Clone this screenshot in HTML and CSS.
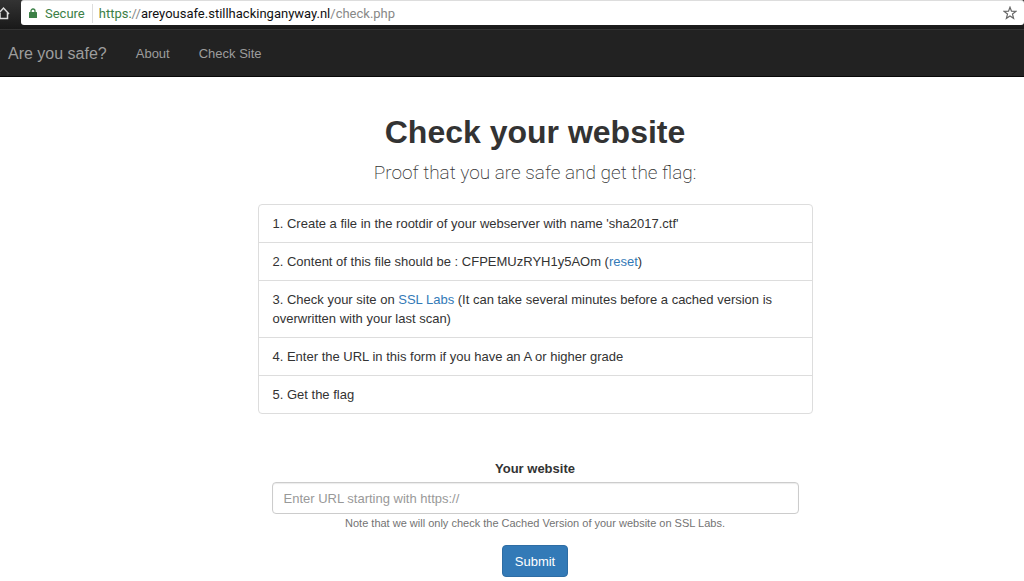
FILE: index.html
```html
<!DOCTYPE html>
<html lang="en">
<head>
  <meta charset="utf-8">
  <title>Are you safe?</title>
  <link rel="stylesheet" href="styles.css">
</head>
<body>
  <div class="browser">
    <button type="button" class="home" aria-label="Home">
      <svg width="12" height="14" viewBox="0 0 12 14"><path d="M-2 8 L3.500 2 L9 8 M0 7 V12.500 H7.500 V7" fill="none" stroke="#ddd" stroke-width="1.500"/></svg>
    </button>
    <div class="address">
      <svg class="lock" width="8" height="10" viewBox="0 0 8 10"><path d="M2 5 V3 a2 2 0 0 1 4 0 V5" fill="none" stroke="#3c8046" stroke-width="1.300"/><rect y="4" width="8" height="6" rx="0.500" fill="#3c8046"/></svg>
      <span class="secure">Secure</span>
      <span class="url"><span class="scheme">https:</span>//<b>areyousafe.stillhackinganyway.nl</b>/check.php</span>
      <svg class="star" width="14" height="14" viewBox="0 0 14 14"><path d="M7 1.200 L8.500 5.200 L12.900 5.400 L9.500 8.100 L10.600 12.300 L7 9.900 L3.400 12.300 L4.500 8.100 L1.100 5.400 L5.500 5.200 Z" fill="none" stroke="#666" stroke-width="1.200"/></svg>
    </div>
  </div>
  <nav class="navbar">
    <a class="brand" href="#">Are you safe?</a>
    <a href="#">About</a>
    <a href="#">Check Site</a>
  </nav>
  <main class="container">
    <h1>Check your website</h1>
    <p class="lead">Proof that you are safe and get the flag:</p>
    <ul class="list-group">
      <li>1. Create a file in the rootdir of your webserver with name 'sha2017.ctf'</li>
      <li>2. Content of this file should be : CFPEMUzRYH1y5AOm (<a href="#">reset</a>)</li>
      <li>3. Check your site on <a href="#">SSL Labs</a> (It can take several minutes before a cached version is overwritten with your last scan)</li>
      <li>4. Enter the URL in this form if you have an A or higher grade</li>
      <li>5. Get the flag</li>
    </ul>
    <form>
      <label for="url">Your website</label>
      <input id="url" type="text" placeholder="Enter URL starting with https://">
      <small>Note that we will only check the Cached Version of your website on SSL Labs.</small>
      <button type="submit" class="btn">Submit</button>
    </form>
  </main>
</body>
</html>
```
FILE: styles.css
```css
* {
  box-sizing: border-box;
}
body {
  margin: 0;
  background: #fff;
  color: #333;
  font-family: "Liberation Sans", Arial, sans-serif;
  font-size: 13px;
  line-height: 19px;
}
a {
  color: #337ab7;
  text-decoration: none;
}
.browser {
  display: flex;
  height: 29px;
  padding-bottom: 4px;
  background: linear-gradient(#333, #191919);
}
.home {
  display: flex;
  align-items: center;
  width: 21px;
  padding: 0;
  border: 0;
  background: none;
}
.address {
  flex: 1;
  display: flex;
  align-items: center;
  padding: 0 7px 0 8px;
  border-top: 1px solid #ddd;
  border-radius: 3px;
  background: #fff;
  color: #888;
  font-family: Roboto, sans-serif;
}
.secure {
  margin-left: 8px;
  padding-right: 7px;
  border-right: 1px solid #ddd;
  color: #3c8046;
}
.url {
  margin-left: 6px;
}
.url b {
  color: #111;
  font-weight: 400;
}
.scheme {
  color: #3c8046;
}
.star {
  margin-left: auto;
}
.navbar {
  display: flex;
  align-items: center;
  gap: 29px;
  height: 48px;
  padding: 0 8px;
  border-top: 1px solid #333;
  border-bottom: 1px solid #080808;
  background: #222;
}
.navbar a {
  color: #9d9d9d;
}
.navbar .brand {
  font-size: 16px;
}
.container {
  padding: 36px 0 4px 46px;
  text-align: center;
}
h1 {
  margin: 0;
  font-size: 32px;
  font-weight: 700;
  line-height: 38px;
}
.lead {
  margin: 9px 0 18px;
  font-family: Roboto, sans-serif;
  font-size: 19px;
  font-weight: 200;
  line-height: 26px;
}
.list-group {
  max-width: 555px;
  margin: 0 auto;
  padding: 0;
  border: 1px solid #ddd;
  border-radius: 4px;
  list-style: none;
  text-align: left;
}
.list-group li {
  padding: 9px 14px;
}
.list-group li + li {
  border-top: 1px solid #ddd;
}
form {
  display: flex;
  flex-direction: column;
  align-items: center;
  max-width: 527px;
  margin: 45px auto 0;
}
label {
  margin-bottom: 4px;
  font-weight: 700;
}
input {
  width: 100%;
  height: 32px;
  padding: 0 11px;
  border: 1px solid #ccc;
  border-radius: 4px;
  box-shadow: inset 0 1px 1px rgba(0, 0, 0, 0.08);
  font: inherit;
}
input::placeholder {
  color: #999;
}
small {
  color: #737373;
  font-size: 11px;
}
.btn {
  height: 32px;
  margin-top: 12px;
  padding: 0 12px;
  border: 1px solid #2e6da4;
  border-radius: 4px;
  background: #337ab7;
  color: #fff;
  font: inherit;
}
```
